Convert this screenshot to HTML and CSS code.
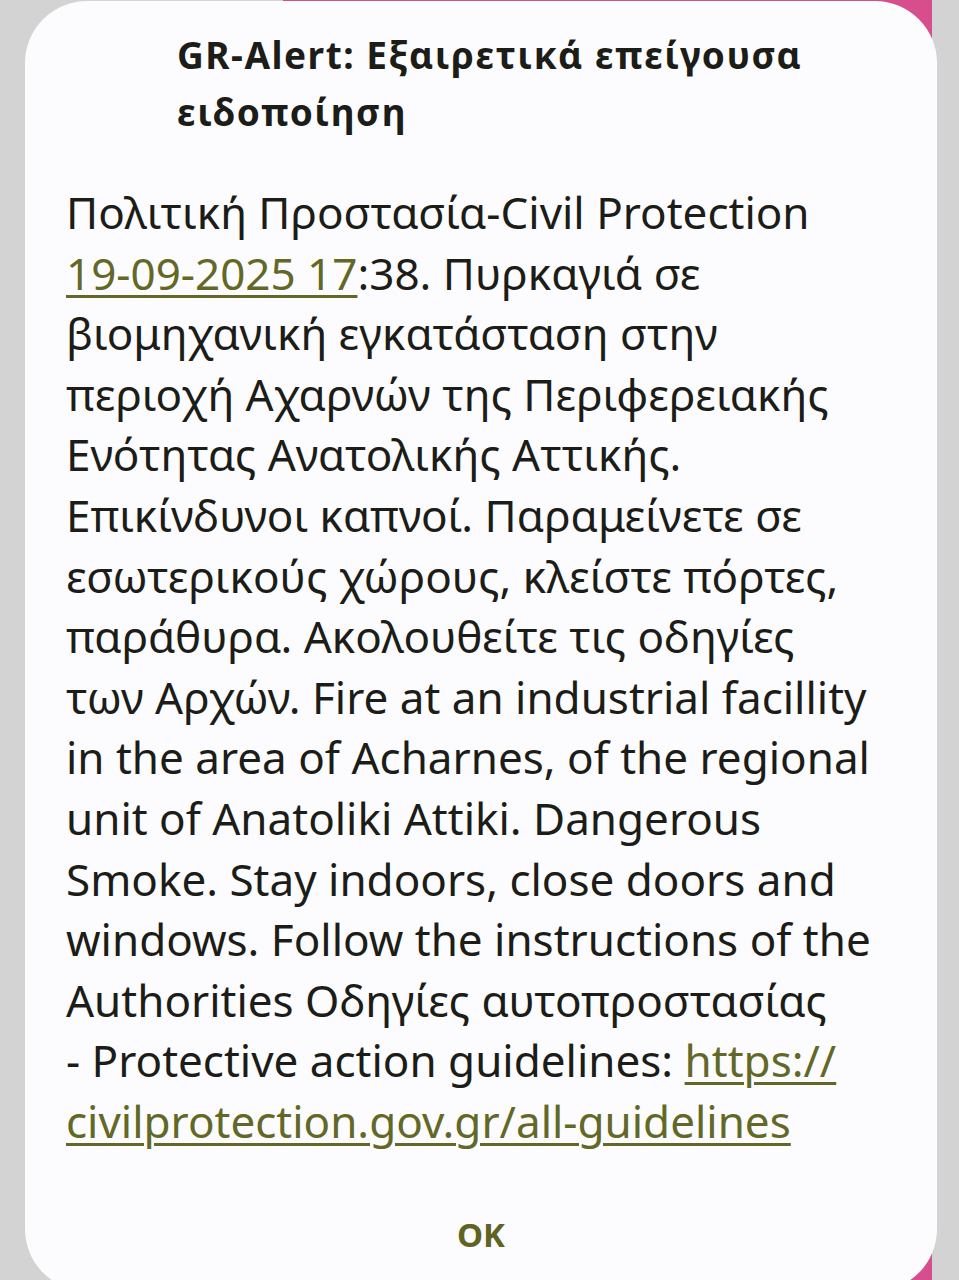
FILE: index.html
```html
<!DOCTYPE html>
<html lang="el">
<head>
<meta charset="utf-8">
<title>GR-Alert</title>
<link rel="stylesheet" href="styles.css">
</head>
<body>
<div class="screen">
  <div class="backdrop"></div>
  <div class="dialog">
    <h1 class="title">GR-Alert: Εξαιρετικά επείγουσα<br>ειδοποίηση</h1>
    <p class="message">Πολιτική Προστασία-Civil Protection<br><a class="link" href="#">19-09-2025 17</a>:38. Πυρκαγιά σε<br>βιομηχανική εγκατάσταση στην<br>περιοχή Αχαρνών της Περιφερειακής<br>Ενότητας Ανατολικής Αττικής.<br>Επικίνδυνοι καπνοί. Παραμείνετε σε<br>εσωτερικούς χώρους, κλείστε πόρτες,<br>παράθυρα. Ακολουθείτε τις οδηγίες<br>των Αρχών. Fire at an industrial facillity<br>in the area of Acharnes, of the regional<br>unit of Anatoliki Attiki. Dangerous<br>Smoke. Stay indoors, close doors and<br>windows. Follow the instructions of the<br>Authorities Οδηγίες αυτοπροστασίας<br>- Protective action guidelines: <a class="link" href="#">https://<br>civilprotection.gov.gr/all-guidelines</a></p>
    <div class="actions"><button class="ok">OK</button></div>
  </div>
</div>
</body>
</html>
```
FILE: styles.css
```css
html, body {
  margin: 0;
  padding: 0;
  height: 1280px;
  overflow: hidden;
  background: #d3d3d3;
}
.screen {
  position: relative;
  height: 1280px;
  padding: 1px 22px 0 25px;
  box-sizing: border-box;
}
.backdrop {
  position: absolute;
  left: 283px;
  right: 27px;
  top: 0;
  bottom: 0;
  background: #d64f8c;
}
.dialog {
  position: relative;
  height: 1290px;
  background: #fcfcfe;
  border-radius: 62px;
  box-sizing: border-box;
  padding-top: 25px;
  font-family: "Noto Sans", "DejaVu Sans", sans-serif;
  color: #1c1c18;
}
.title {
  margin: 0;
  padding-left: 152px;
  font-size: 37px;
  font-weight: 700;
  letter-spacing: 1.5px;
  line-height: 57px;
  white-space: nowrap;
}
.message {
  margin: 42px 0 0 0;
  padding-left: 41px;
  font-size: 44px;
  font-weight: 400;
  line-height: 60.6px;
  white-space: nowrap;
}
.link {
  color: #636827;
  text-decoration: underline;
  text-decoration-thickness: 3px;
  text-underline-offset: 5px;
}
.actions {
  display: flex;
  justify-content: center;
  margin-top: 63px;
}
.ok {
  border: 0;
  background: transparent;
  padding: 0;
  font-family: "Noto Sans", "DejaVu Sans", sans-serif;
  font-size: 33px;
  font-weight: 700;
  line-height: 40px;
  color: #5f6423;
}
```
